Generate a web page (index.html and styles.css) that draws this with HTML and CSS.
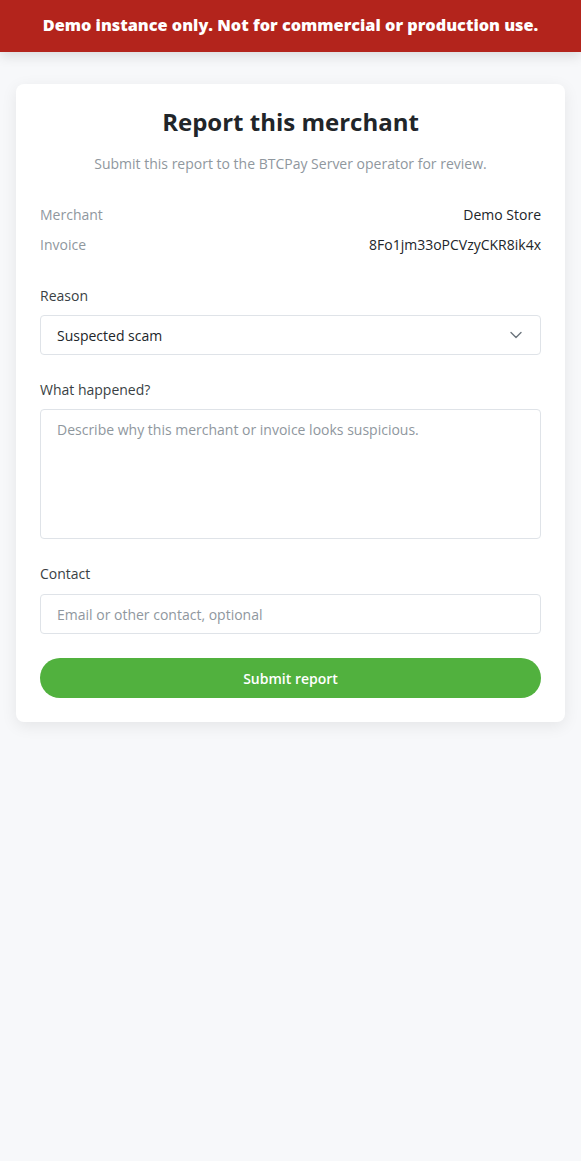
FILE: index.html
```html
<!DOCTYPE html>
<html lang="en">
<head>
<meta charset="utf-8">
<title>Report this merchant</title>
<link rel="stylesheet" href="styles.css">
</head>
<body>
<div class="banner">Demo instance only. Not for commercial or production use.</div>
<main class="page">
  <section class="card">
    <h1 class="title">Report this merchant</h1>
    <p class="subtitle">Submit this report to the BTCPay Server operator for review.</p>
    <dl class="meta">
      <div class="meta-row"><dt>Merchant</dt><dd>Demo Store</dd></div>
      <div class="meta-row"><dt>Invoice</dt><dd>8Fo1jm33oPCVzyCKR8ik4x</dd></div>
    </dl>
    <form class="form">
      <div class="field">
        <label class="label">Reason</label>
        <div class="select">
          <span>Suspected scam</span>
          <svg class="chev" width="12" height="8" viewBox="0 0 12 8"><path d="M1 1.5 L6 6.5 L11 1.5" fill="none" stroke="#6c757d" stroke-width="1.4" stroke-linecap="round" stroke-linejoin="round"/></svg>
        </div>
      </div>
      <div class="field">
        <label class="label">What happened?</label>
        <textarea class="textarea" placeholder="Describe why this merchant or invoice looks suspicious."></textarea>
      </div>
      <div class="field">
        <label class="label label-gap">Contact</label>
        <input class="input" type="text" placeholder="Email or other contact, optional">
      </div>
      <button class="submit" type="button">Submit report</button>
    </form>
  </section>
</main>
</body>
</html>
```

FILE: styles.css
```css
* { box-sizing: border-box; }
html, body { margin: 0; padding: 0; }
body {
  background: #f7f8fa;
  font-family: "Open Sans", "Noto Sans", sans-serif;
  color: #212529;
  min-height: 1161px;
}
.banner {
  background: #b3241c;
  color: #fff;
  font-weight: 800;
  font-size: 16.3px;
  height: 52px;
  padding-bottom: 2px;
  display: flex;
  align-items: center;
  justify-content: center;
  box-shadow: 0 4px 12px rgba(0,0,0,0.12);
  position: relative;
}
.page {
  padding: 32px 16px;
}
.card {
  background: #fff;
  border-radius: 8px;
  padding: 22px 24px 24px;
  box-shadow: 0 4px 16px rgba(0,0,0,0.08);
}
.title {
  margin: 0;
  font-size: 24px;
  line-height: 31px;
  font-weight: 700;
  text-align: center;
  color: #212529;
}
.subtitle {
  margin: 16px 0 0;
  font-size: 14px;
  line-height: 21px;
  color: #8f979e;
  text-align: center;
}
.meta {
  margin: 30px 0 0;
  display: flex;
  flex-direction: column;
  gap: 9px;
}
.meta-row {
  display: flex;
  justify-content: space-between;
  font-size: 14px;
  line-height: 21px;
}
.meta-row dt { color: #8f979e; }
.meta-row dd { margin: 0; color: #212529; }
.form {
  margin-top: 30px;
  display: flex;
  flex-direction: column;
  gap: 24px;
}
.field { display: flex; flex-direction: column; }
.label {
  font-size: 14px;
  line-height: 21px;
  color: #3a3f44;
  margin-bottom: 9px;
}
.label-gap { margin-bottom: 10px; }
.select, .input, .textarea {
  border: 1px solid #dfe3e8;
  border-radius: 4px;
  font-family: inherit;
  font-size: 14px;
  background: #fff;
  color: #212529;
}
.select {
  height: 40px;
  display: flex;
  align-items: center;
  justify-content: space-between;
  padding: 0 18px 0 16px;
}
.chev { width: 12px; height: 8px; }
.textarea {
  height: 130px;
  padding: 9px 16px;
  line-height: 21px;
  resize: none;
  width: 100%;
}
.input {
  height: 40px;
  padding: 0 16px;
  width: 100%;
}
.textarea::placeholder, .input::placeholder { color: #8f979e; opacity: 1; }
.submit {
  height: 40px;
  border: 0;
  border-radius: 20px;
  background: #51b13e;
  color: #fff;
  font-family: inherit;
  font-size: 14px;
  font-weight: 600;
}
```
